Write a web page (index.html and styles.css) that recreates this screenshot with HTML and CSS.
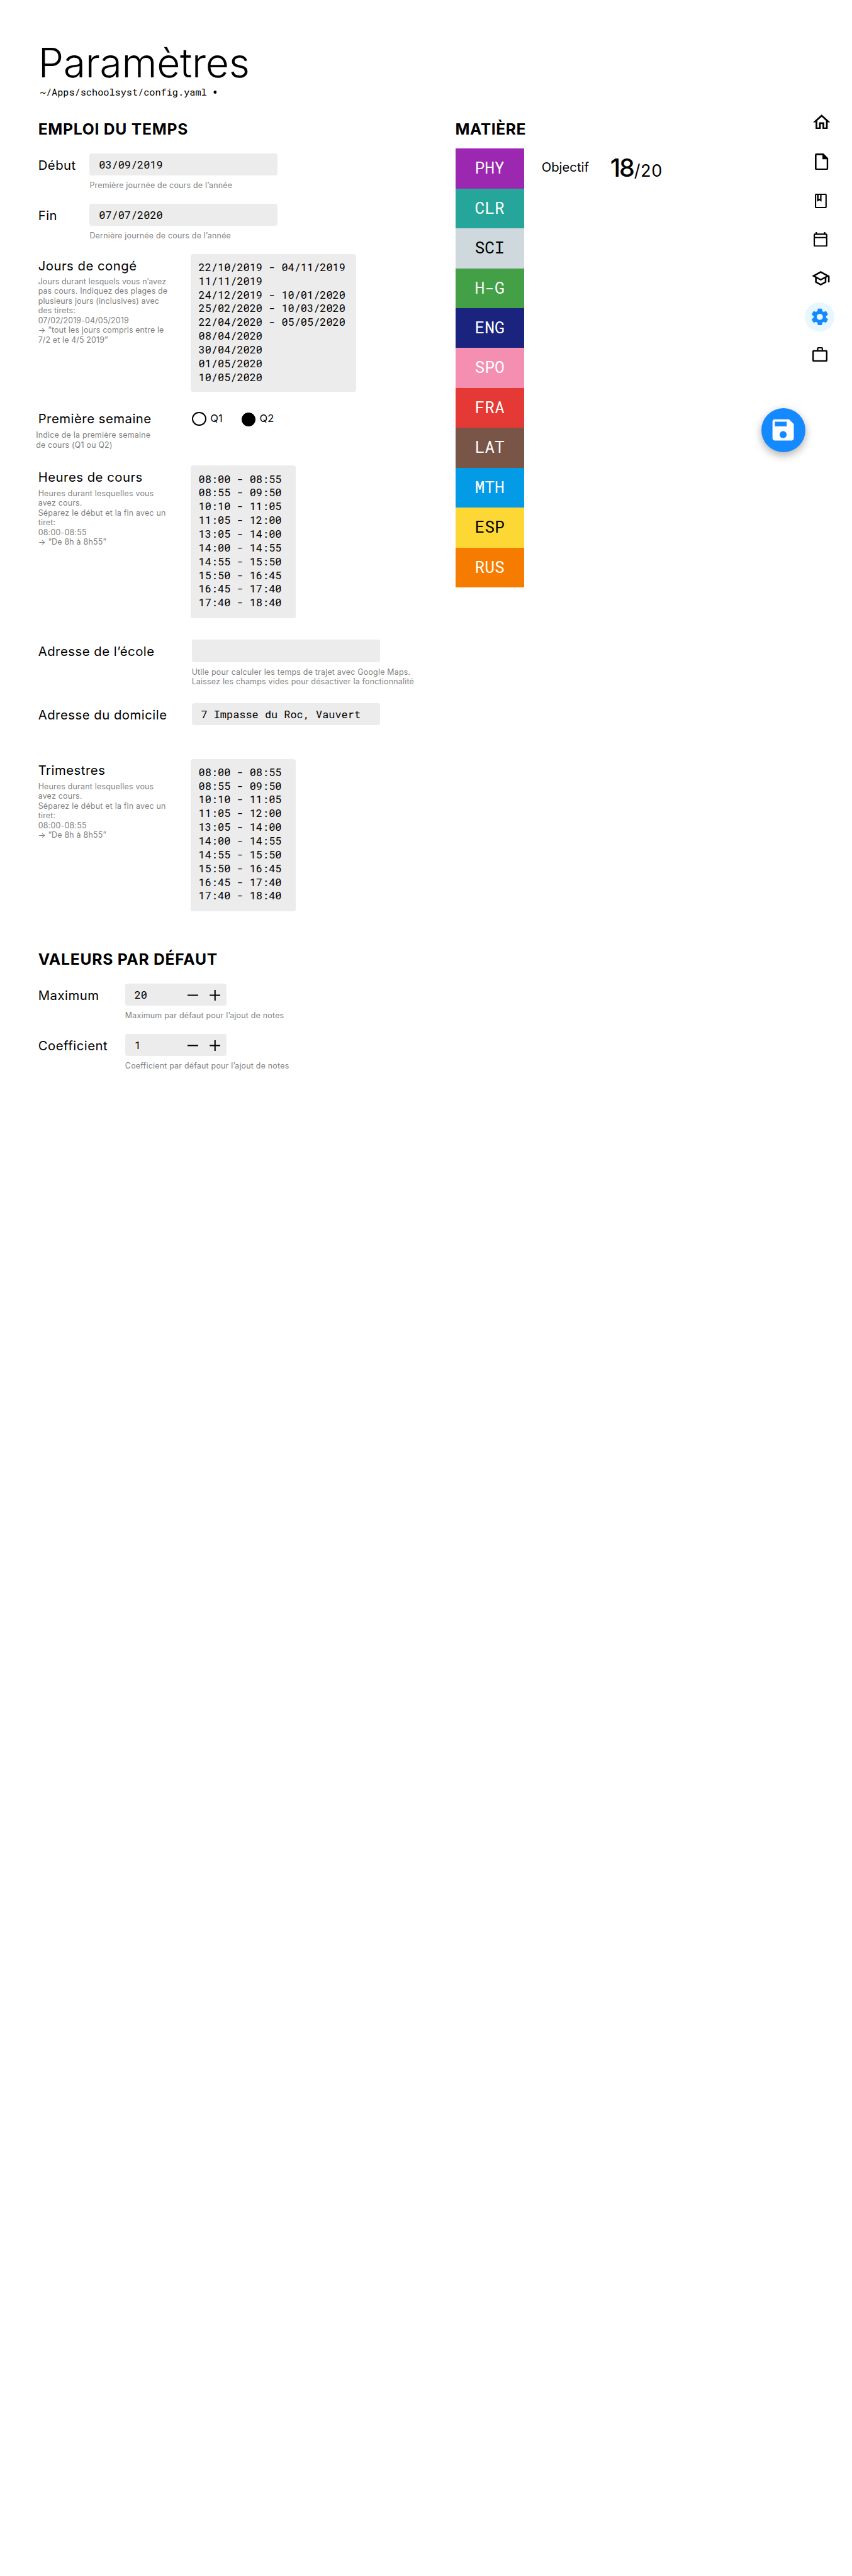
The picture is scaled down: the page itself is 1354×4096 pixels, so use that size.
FILE: index.html
```html
<!DOCTYPE html>
<html lang="fr">
<head>
<meta charset="utf-8">
<title>Paramètres</title>
<link rel="stylesheet" href="styles.css">
</head>
<body>
<div class="page">
  <main class="content">
    <header class="header">
      <h1 class="title">Paramètres</h1>
      <p class="path">~/Apps/schoolsyst/config.yaml <span class="unsaved">•</span></p>
    </header>
    <div class="columns">
      <div class="column">
        <section class="section">
          <h2 class="heading">EMPLOI DU TEMPS</h2>
          <div class="field field--date">
            <label class="label">Début</label>
            <div><div class="input">03/09/2019</div><p class="hint">Première journée de cours de l’année</p></div>
          </div>
          <div class="field field--date">
            <label class="label">Fin</label>
            <div><div class="input">07/07/2020</div><p class="hint">Dernière journée de cours de l’année</p></div>
          </div>
          <div class="field field--wide">
            <div>
              <label class="label">Jours de congé</label>
              <p class="help help--days">Jours durant lesquels vous n’avez<br>pas cours. Indiquez des plages de<br>plusieurs jours (inclusives) avec<br>des tirets:<br>07/02/2019-04/05/2019<br>→ “tout les jours compris entre le<br>7/2 et le 4/5 2019”</p>
            </div>
            <pre class="list list--days">22/10/2019 - 04/11/2019
11/11/2019
24/12/2019 - 10/01/2020
25/02/2020 - 10/03/2020
22/04/2020 - 05/05/2020
08/04/2020
30/04/2020
01/05/2020
10/05/2020</pre>
          </div>
          <div class="field field--wide field--week">
            <div>
              <label class="label">Première semaine</label>
              <p class="help help--week">Indice de la première semaine<br>de cours (Q1 ou Q2)</p>
            </div>
            <div class="radios">
              <span class="radio"><span class="dot"></span>Q1</span>
              <span class="radio"><span class="dot dot--on"></span>Q2</span>
            </div>
          </div>
          <div class="field field--wide field--hours">
            <div>
              <label class="label">Heures de cours</label>
              <p class="help">Heures durant lesquelles vous<br>avez cours.<br>Séparez le début et la fin avec un<br>tiret:<br>08:00-08:55<br>→ “De 8h à 8h55”</p>
            </div>
            <pre class="list">08:00 - 08:55
08:55 - 09:50
10:10 - 11:05
11:05 - 12:00
13:05 - 14:00
14:00 - 14:55
14:55 - 15:50
15:50 - 16:45
16:45 - 17:40
17:40 - 18:40</pre>
          </div>
          <div class="field field--wide field--school">
            <label class="label">Adresse de l’école</label>
            <div class="address"><div class="input"></div><p class="hint">Utile pour calculer les temps de trajet avec Google Maps.<br>Laissez les champs vides pour désactiver la fonctionnalité</p></div>
          </div>
          <div class="field field--wide field--home">
            <label class="label">Adresse du domicile</label>
            <div class="address"><div class="input">7 Impasse du Roc, Vauvert</div></div>
          </div>
          <div class="field field--wide field--terms">
            <div>
              <label class="label">Trimestres</label>
              <p class="help">Heures durant lesquelles vous<br>avez cours.<br>Séparez le début et la fin avec un<br>tiret:<br>08:00-08:55<br>→ “De 8h à 8h55”</p>
            </div>
            <pre class="list">08:00 - 08:55
08:55 - 09:50
10:10 - 11:05
11:05 - 12:00
13:05 - 14:00
14:00 - 14:55
14:55 - 15:50
15:50 - 16:45
16:45 - 17:40
17:40 - 18:40</pre>
          </div>
        </section>
        <section class="section section--defaults">
          <h2 class="heading">VALEURS PAR DÉFAUT</h2>
          <div class="field field--number">
            <label class="label">Maximum</label>
            <div>
              <div class="input input--number"><span>20</span><svg class="step" viewBox="0 0 74 24"><path d="M0 10.5h24v3H0zM50 10.5h24v3H50zM60.5 0h3v24h-3z"/></svg></div>
              <p class="hint">Maximum par défaut pour l’ajout de notes</p>
            </div>
          </div>
          <div class="field field--number">
            <label class="label">Coefficient</label>
            <div>
              <div class="input input--number"><span>1</span><svg class="step" viewBox="0 0 74 24"><path d="M0 10.5h24v3H0zM50 10.5h24v3H50zM60.5 0h3v24h-3z"/></svg></div>
              <p class="hint">Coefficient par défaut pour l’ajout de notes</p>
            </div>
          </div>
        </section>
      </div>
      <section class="section">
        <h2 class="heading heading--subjects">MATIÈRE</h2>
        <div class="subjects">
          <ul class="tabs">
            <li class="tab tab--phy">PHY</li>
            <li class="tab tab--clr">CLR</li>
            <li class="tab tab--sci">SCI</li>
            <li class="tab tab--hg">H-G</li>
            <li class="tab tab--eng">ENG</li>
            <li class="tab tab--spo">SPO</li>
            <li class="tab tab--fra">FRA</li>
            <li class="tab tab--lat">LAT</li>
            <li class="tab tab--mth">MTH</li>
            <li class="tab tab--esp">ESP</li>
            <li class="tab tab--rus">RUS</li>
          </ul>
          <div class="goal">
            <span class="goal-label">Objectif</span>
            <span class="grade">18</span><span class="scale">/20</span>
          </div>
        </div>
      </section>
    </div>
  </main>
  <nav class="nav">
    <svg class="icon icon--home" viewBox="2 3 20 17"><path d="M12 5.69l5 4.5V18h-2v-6H9v6H7v-7.81l5-4.5M12 3L2 12h3v8h6v-6h2v6h6v-8h3L12 3z"/></svg>
    <svg class="icon icon--file" viewBox="0 0 30 37.3"><path fill-rule="evenodd" d="M3.5 0H19.5L30 10.5V33.8a3.5 3.5 0 0 1-3.5 3.5h-23A3.5 3.5 0 0 1 0 33.8V3.5A3.5 3.5 0 0 1 3.5 0zM3.7 3.8V34H26.6V13H17V3.8z"/></svg>
    <svg class="icon icon--book" viewBox="0 0 26.7 32.7"><path fill-rule="evenodd" d="M3 0h20.7a3 3 0 0 1 3 3v26.7a3 3 0 0 1-3 3H3a3 3 0 0 1-3-3V3a3 3 0 0 1 3-3zM3 3v26.7h20.7V3H15v15l-5-3.2L5 18V3zM8.4 3v9.2l1.6-1.2 1.8 1.2V3z"/></svg>
    <svg class="icon icon--calendar" viewBox="0 0 31 33.3"><path fill-rule="evenodd" d="M4.5 0h3v3.3h16V0h3v3.3H28a3 3 0 0 1 3 3v24a3 3 0 0 1-3 3H3a3 3 0 0 1-3-3v-24a3 3 0 0 1 3-3h1.5zM3 6.3V11h25V6.3zM3 14v16.3h25V14z"/></svg>
    <svg class="icon icon--school" viewBox="1 3 22 18"><path d="M12 3L1 9l4 2.18v6L12 21l7-3.82v-6l2-1.09V17h2V9L12 3zm6.82 6L12 12.72 5.18 9 12 5.28 18.82 9zM17 15.99l-5 2.73-5-2.73v-3.72L12 15l5-2.73v3.72z"/></svg>
    <span class="current"><svg class="icon icon--gear" viewBox="0 0 24 24"><path d="M19.43 12.98c.04-.32.07-.64.07-.98s-.03-.66-.07-.98l2.11-1.65c.19-.15.24-.42.12-.64l-2-3.46c-.12-.22-.39-.3-.61-.22l-2.49 1c-.52-.4-1.08-.73-1.69-.98l-.38-2.65C14.46 2.18 14.25 2 14 2h-4c-.25 0-.46.18-.49.42l-.38 2.65c-.61.25-1.17.59-1.69.98l-2.49-1c-.23-.09-.49 0-.61.22l-2 3.46c-.13.22-.07.49.12.64l2.11 1.65c-.04.32-.07.65-.07.98s.03.66.07.98l-2.11 1.65c-.19.15-.24.42-.12.64l2 3.46c.12.22.39.3.61.22l2.49-1c.52.4 1.08.73 1.69.98l.38 2.65c.03.24.24.42.49.42h4c.25 0 .46-.18.49-.42l.38-2.65c.61-.25 1.17-.59 1.69-.98l2.49 1c.23.09.49 0 .61-.22l2-3.46c.12-.22.07-.49-.12-.64l-2.11-1.65zM12 15.75c-2.07 0-3.75-1.68-3.75-3.75s1.68-3.75 3.75-3.75 3.75 1.68 3.75 3.75-1.68 3.75-3.75 3.75z"/></svg></span>
    <svg class="icon icon--case" viewBox="0 0 34 32.7"><path fill-rule="evenodd" d="M10.5 6.7V3a3 3 0 0 1 3-3H21a3 3 0 0 1 3 3v3.7H31a3 3 0 0 1 3 3v20a3 3 0 0 1-3 3H3a3 3 0 0 1-3-3v-20a3 3 0 0 1 3-3zM13.5 3v3.7H21V3zM3.3 9.9v19.5h27.4V9.9z"/></svg>
  </nav>
  <button class="save" aria-label="Enregistrer"><svg class="save-icon" viewBox="0 0 24 24"><path d="M17 3H5c-1.11 0-2 .9-2 2v14c0 1.1.89 2 2 2h14c1.1 0 2-.9 2-2V7l-4-4zm-5 16c-1.66 0-3-1.34-3-3s1.34-3 3-3 3 1.34 3 3-1.34 3-3 3zm3-10H5V5h10v4z"/></svg></button>
</div>
</body>
</html>
```
FILE: styles.css
```css
/* 1rem stands for 100 design pixels */
html { font-size: 70.521px; }
* { box-sizing: border-box; margin: 0; padding: 0; }
body { background: #fff; color: #000; font-family: Inter, "Liberation Sans", sans-serif; }
svg { display: block; fill: currentColor; }

.page { position: relative; display: flex; align-items: flex-start; min-height: 4096px; }
.content { flex: none; width: 18.14rem; padding: .889rem 0 0 .86rem; }
.title { font-size: .91rem; line-height: 1.06rem; font-weight: 300; letter-spacing: -.004em; }
.path { padding-left: .045rem; font: .216rem/.26rem "Roboto Mono", "Liberation Mono", monospace; }
.unsaved { margin-left: -.04rem; font-size: .32rem; line-height: 0; vertical-align: -.03rem; }

.columns { display: flex; align-items: flex-start; margin-top: .5rem; }
.column { flex: none; width: 9.4rem; }
.heading { font-size: .35rem; line-height: .4rem; font-weight: 700; letter-spacing: .03em; }
.heading--subjects { letter-spacing: .022em; }

.field { display: grid; margin-top: .298rem; }
.heading + .field { margin-top: .35rem; }
.field--date { grid-template-columns: 1.16rem 4.24rem; }
.field--wide { grid-template-columns: 3.44rem max-content; align-items: start; }
.field--week { margin-top: .343rem; }
.field--hours { margin-top: .358rem; }
.field--school { margin-top: .493rem; }
.field--home { margin-top: .373rem; }
.field--terms { margin-top: .74rem; }
.field--number { grid-template-columns: 1.96rem 2.29rem; }
.section--defaults { margin-top: .883rem; }

.label { display: block; padding-top: .013rem; font-size: .288rem; line-height: .5rem; height: .513rem; letter-spacing: .025em; white-space: nowrap; }
.help, .hint { font-size: .176rem; line-height: .22rem; letter-spacing: .018em; color: #808080; white-space: nowrap; }
.help--days { letter-spacing: .012em; }
.help--week { margin: .014rem 0 0 -.05rem; }
.hint { margin-top: .115rem; }

.input { height: .5rem; padding-left: .21rem; border-radius: .05rem; background: #ececec; font: .24rem/.5rem "Roboto Mono", "Liberation Mono", monospace; letter-spacing: 0; white-space: nowrap; }
.input--number { display: flex; align-items: center; justify-content: space-between; padding-right: .15rem; }
.step { width: .74rem; height: .24rem; margin-top: .02rem; }
.address { width: 4.24rem; margin-left: .02rem; }
.list { width: 2.36rem; height: 3.437rem; padding: .145rem 0 0 .175rem; border-radius: .05rem; background: #ececec; font: .24rem/.31rem "Roboto Mono", "Liberation Mono", monospace; }
.list--days { width: 3.73rem; height: 3.107rem; }

.radios { display: flex; gap: .415rem; padding-left: .03rem; height: .5rem; }
.radio { display: flex; gap: .09rem; width: .695rem; font-size: .235rem; line-height: .52rem; white-space: nowrap; }
.dot { flex: none; width: .32rem; height: .32rem; margin-top: .108rem; border: 2px solid #000; border-radius: 50%; }
.dot--on { margin-top: .127rem; background: #000; }

.subjects { display: flex; align-items: flex-start; margin-top: .24rem; }
.tabs { width: 1.55rem; list-style: none; }
.tab { height: .9rem; color: #fff; font: .375rem/.85rem "Roboto Mono", "Liberation Mono", monospace; text-align: center; }
.tab--phy { background: #9c27b0; }
.tab--clr { background: #26a69a; }
.tab--sci { background: #cfd8dc; color: #000; }
.tab--hg { background: #43a047; }
.tab--eng { background: #1a237e; }
.tab--spo { background: #f48fb1; }
.tab--fra { background: #e53935; }
.tab--lat { background: #795548; }
.tab--mth { background: #039be5; }
.tab--esp { background: #fdd835; color: #000; }
.tab--rus { background: #f57c00; }

.goal { display: flex; padding-left: .395rem; }
.goal-label { width: 1.545rem; font-size: .288rem; line-height: .86rem; }
.grade { font-size: .56rem; line-height: .88rem; font-weight: 500; letter-spacing: -.05em; }
.scale { margin-left: .01rem; font-size: .385rem; line-height: 1.01rem; letter-spacing: .025em; }

.nav { display: flex; flex-direction: column; width: .66rem; padding-top: 2.577rem; }
.icon--home { width: .39rem; height: .333rem; margin-left: .177rem; }
.icon--file { width: .3rem; height: .373rem; margin: .55rem 0 0 .23rem; }
.icon--book { width: .267rem; height: .327rem; margin: .537rem 0 0 .23rem; }
.icon--calendar { width: .31rem; height: .333rem; margin: .533rem 0 0 .2rem; }
.icon--school { width: .406rem; height: .327rem; margin: .55rem 0 0 .157rem; }
.current { display: grid; place-items: center; width: .66rem; height: .66rem; margin-top: .377rem; border-radius: 50%; background: #e6f7ff; color: #1589ff; }
.icon--gear { width: .45rem; height: .45rem; }
.icon--case { width: .34rem; height: .327rem; margin: .353rem 0 0 .163rem; }

/* floating action button */
.save { position: absolute; top: 9.2rem; left: 17.16rem; display: grid; place-items: center; width: .99rem; height: .99rem; border: 0; border-radius: 50%; background: #1589ff; color: #fff; box-shadow: 0 .07rem .2rem rgba(0, 0, 0, .32); }
.save-icon { width: .64rem; height: .64rem; }
```
